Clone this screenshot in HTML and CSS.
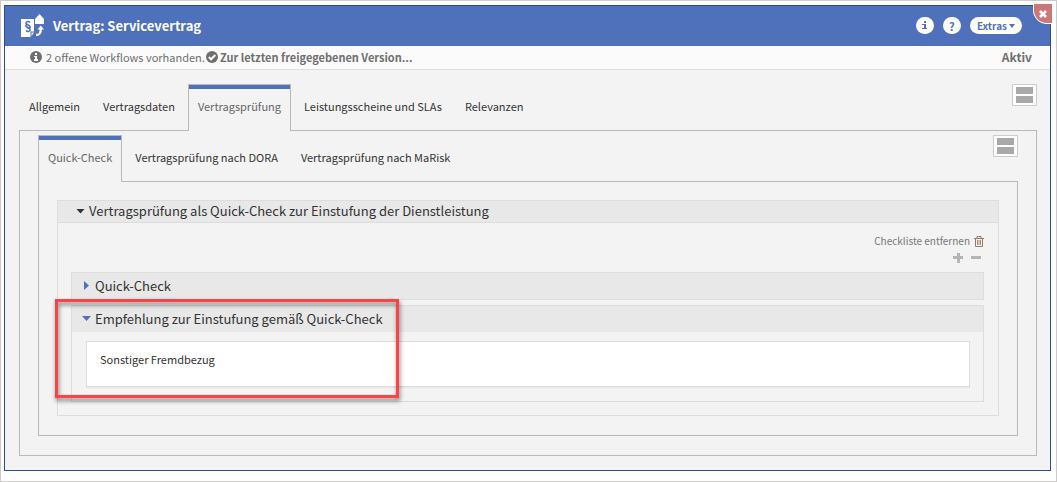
FILE: index.html
```html
<!DOCTYPE html>
<html lang="de">
<head>
    <meta charset="UTF-8">
    <meta name="viewport" content="width=device-width, initial-scale=1.0">
    <title>Vertrag: Servicevertrag</title>
    <link rel="stylesheet" href="styles.css">
</head>
<body>
    <main class="window">
        <header class="titlebar">
            <svg class="logo" viewBox="0 0 24 24" aria-hidden="true">
                <path fill="#fff" d="M0 5h13v12.500H9.500V23H0z"/>
                <path fill="#fff" d="M10.500 18.500H13L10.500 22z"/>
                <path fill="none" stroke="#4f70bb" stroke-width="1.600" d="M9 8.600C8.200 7 5 7.200 5 9c0 2 4.200 2 4.200 4 0 1.500-3 1.500-3.200-.2M5.800 10.300c-1.800 1.200-.8 2.500 1 3.200 2 .8 2.300 1.500 2.300 2.500 0 1.800-3.200 2-4 .3"/>
                <path fill="#fff" d="M14 10V5l4.500-5L23 5v5z"/>
                <path fill="none" stroke="#fff" stroke-width="2.400" d="M15 21c3.500 0 4.800-1.500 4.800-6"/>
                <path fill="#fff" d="M16.500 15.500l3.300-4 3.200 4z"/>
            </svg>
            <h1>Vertrag: Servicevertrag</h1>
            <div class="actions">
                <button class="pill round" type="button" aria-label="Information">
                    <svg width="5" height="9" viewBox="0 0 5 9"><path fill="currentColor" d="M2 0h2v2H2zM0 3h4v4h1v1H0V7h2V4H0z"/></svg>
                </button>
                <button class="pill round" type="button">?</button>
                <button class="pill" type="button">Extras<span class="caret"></span></button>
            </div>
            <button class="close" type="button" aria-label="Schließen">
                <svg width="8" height="8" viewBox="0 0 8 8"><path stroke="#fff" stroke-width="2.600" d="M1 1l6 6M7 1L1 7"/></svg>
            </button>
        </header>

        <div class="status">
            <svg class="status-icon" viewBox="0 0 12 12" aria-hidden="true">
                <circle cx="6" cy="6" r="6" fill="#6f6f6f"/>
                <path fill="#fff" d="M5 2h2v2H5zM4 5h3v3h1v2H4V8h1V6H4z"/>
            </svg>
            <span class="status-text">2 offene Workflows vorhanden.</span>
            <svg class="status-icon" viewBox="0 0 12 12" aria-hidden="true">
                <circle cx="6" cy="6" r="6" fill="#6f6f6f"/>
                <path fill="none" stroke="#fff" stroke-width="2" d="M2.800 6l2.300 2.300L9.300 4"/>
            </svg>
            <a class="version" href="#version">Zur letzten freigegebenen Version...</a>
            <strong class="state">Aktiv</strong>
        </div>

        <div class="content">
            <div class="tabs-row">
                <nav class="tabs">
                    <a class="tab" href="#allgemein">Allgemein</a>
                    <a class="tab" href="#vertragsdaten">Vertragsdaten</a>
                    <a class="tab active" href="#pruefung">Vertragsprüfung</a>
                    <a class="tab" href="#leistungsscheine">Leistungsscheine und SLAs</a>
                    <a class="tab" href="#relevanzen">Relevanzen</a>
                </nav>
                <button class="layout-btn" type="button" aria-label="Ansicht wechseln"><span></span><span></span></button>
            </div>
            <section class="panel" id="pruefung">
                <div class="tabs-row">
                    <nav class="tabs">
                        <a class="tab active" href="#quick">Quick-Check</a>
                        <a class="tab" href="#dora">Vertragsprüfung nach DORA</a>
                        <a class="tab" href="#marisk">Vertragsprüfung nach MaRisk</a>
                    </nav>
                    <button class="layout-btn" type="button" aria-label="Ansicht wechseln"><span></span><span></span></button>
                </div>
                <section class="panel inner" id="quick">
                    <div class="group">
                        <button class="group-head" type="button" aria-expanded="true">
                            <span class="arrow down"></span>Vertragsprüfung als Quick-Check zur Einstufung der Dienstleistung
                        </button>
                        <div class="group-body">
                            <div class="tools">
                                <button class="remove" type="button">Checkliste entfernen
                                    <svg width="10" height="11" viewBox="0 0 10 11" fill="none" stroke="#8b7b70">
                                        <path d="M0 2.500h10M3 2V.5h4V2M1.500 3v7.500h7V3"/>
                                        <path stroke="#c08a5c" d="M3.500 4v5M5 4v5M6.500 4v5"/>
                                    </svg>
                                </button>
                                <div class="zoom">
                                    <button type="button" aria-label="Alle aufklappen">
                                        <svg width="10" height="10" viewBox="0 0 10 10"><path fill="#b5b5b5" d="M4 0h3v3h3v3H7v4H4V6H0V3h4z"/></svg>
                                    </button>
                                    <button type="button" aria-label="Alle zuklappen">
                                        <svg width="10" height="10" viewBox="0 0 10 10"><path fill="#b5b5b5" d="M0 3h10v3H0z"/></svg>
                                    </button>
                                </div>
                            </div>
                            <div class="item">
                                <button class="item-head" type="button" aria-expanded="false">
                                    <span class="arrow right"></span>Quick-Check
                                </button>
                            </div>
                            <div class="item">
                                <button class="item-head" type="button" aria-expanded="true">
                                    <span class="arrow down"></span>Empfehlung zur Einstufung gemäß Quick-Check
                                </button>
                                <p class="result">Sonstiger Fremdbezug</p>
                                <div class="marker"></div>
                            </div>
                        </div>
                    </div>
                </section>
            </section>
        </div>
    </main>
</body>
</html>
```

FILE: styles.css
```css
* {
    box-sizing: border-box;
}
body {
    margin: 0;
    min-height: 100vh;
    padding: 4px 5px 10px 3px;
    border: 1px solid #cfcaca;
    background-color: #fff;
    font-family: "Noto Sans CJK SC", "Open Sans", sans-serif;
    font-size: 11px;
    line-height: 16px;
    color: #333;
}
button {
    padding: 0;
    border: 0;
    background: none;
    font: inherit;
    color: inherit;
    cursor: pointer;
}
a {
    color: inherit;
    text-decoration: none;
}
svg {
    display: block;
    flex: none;
}

/* Titelleiste */
.window {
    border: 1px solid #2f4c8f;
    background-color: #f3f3f3;
}
.titlebar {
    position: relative;
    display: flex;
    align-items: center;
    height: 40px;
    padding: 0 28px 1px 16px;
    background-color: #4f70bb;
    color: #fff;
}
.logo {
    width: 24px;
    height: 24px;
}
h1 {
    margin: 0 0 0 8px;
    font-size: 13px;
    line-height: 20px;
    font-weight: bold;
}
.actions {
    display: flex;
    gap: 9px;
    margin-left: auto;
}
.pill {
    display: flex;
    align-items: center;
    justify-content: center;
    height: 17px;
    padding: 0 7px;
    border-radius: 9px;
    background-color: #fff;
    color: #4f70bb;
    font-size: 10px;
    font-weight: bold;
    line-height: 16px;
}
.round {
    width: 18px;
    padding: 0;
    font-size: 11px;
}
.caret {
    margin-left: 2px;
    border: 3px solid transparent;
    border-top: 4px solid #4f70bb;
    border-bottom: 0;
}
.close {
    position: absolute;
    top: -2px;
    right: -2px;
    display: flex;
    align-items: center;
    justify-content: center;
    width: 19px;
    height: 20px;
    border: 1px solid #fff;
    border-width: 0 0 1px 1px;
    border-bottom-left-radius: 14px;
    background-color: #cb777a;
}

/* Statuszeile */
.status {
    display: flex;
    align-items: center;
    height: 24px;
    padding: 0 18px 2px 25px;
    border-bottom: 1px solid #ddd;
    background-color: #fbfbfb;
    color: #6f6f6f;
}
.status-icon {
    width: 12px;
    height: 12px;
}
.status-text {
    margin: 0 1px 0 4px;
}
.version {
    margin-left: 2px;
    font-weight: bold;
}
.state {
    margin-left: auto;
    font-size: 12px;
}

/* Reiter */
.content {
    padding: 14px 13px 14px 14px;
}
.tabs-row {
    display: flex;
    justify-content: space-between;
    align-items: flex-start;
}
.tabs {
    display: flex;
    gap: 3px;
    margin-bottom: -1px;
}
.tab {
    height: 47px;
    padding: 13px 9px 0;
    border: 1px solid transparent;
    border-bottom: 0;
}
.active {
    position: relative;
    border-color: #b9b9b9;
    background-color: #f3f3f3;
    box-shadow: inset 0 4px #4f70bb;
    color: #666;
}
.layout-btn {
    display: flex;
    flex-direction: column;
    gap: 2px;
    width: 25px;
    height: 22px;
    padding: 2px 3px;
    border: 1px solid #ccc;
    background-color: #fff;
}
.layout-btn span {
    width: 17px;
    height: 7px;
    background-color: #a9a9a9;
}
.panel {
    padding: 4px 18px 19px;
    border: 1px solid #b9b9b9;
}
.inner {
    padding-top: 18px;
}

/* Aufklappbare Gruppen */
.group {
    border: 1px solid #ddd;
}
.group-head,
.item-head {
    display: flex;
    align-items: center;
    width: 100%;
    background-color: #e8e8e8;
    font-size: 13px;
    text-align: left;
}
.group-head {
    height: 22px;
    padding: 0 0 1px 18px;
    border-bottom: 1px solid #ddd;
}
.group-body {
    padding: 10px 14px 13px 13px;
}
.tools {
    display: flex;
    flex-direction: column;
    align-items: flex-end;
    gap: 4px;
    height: 39px;
}
.remove {
    display: flex;
    align-items: center;
    gap: 4px;
    color: #777;
    font-size: 10px;
}
.zoom {
    display: flex;
    gap: 8px;
    margin-right: 3px;
}
.item {
    position: relative;
    border: 1px solid #ddd;
}
.item + .item {
    margin-top: 5px;
}
.item-head {
    height: 26px;
    padding: 0 0 1px 10px;
}
.arrow {
    flex: none;
    width: 9px;
    height: 5px;
    margin-right: 4px;
    background-color: #333;
    clip-path: polygon(0 0, 100% 0, 50% 100%);
}
.item .arrow {
    background-color: #4f70bb;
}
.item .right {
    width: 5px;
    height: 9px;
    margin: 0 6px 0 2px;
    clip-path: polygon(0 0, 100% 50%, 0 100%);
}
.result {
    min-height: 46px;
    margin: 9px 13px 14px 14px;
    padding: 9px 13px;
    border: 1px solid #ddd;
    background-color: #fff;
    box-shadow: 0 1px 1px rgba(0, 0, 0, 0.05);
}
.marker {
    position: absolute;
    top: -7px;
    left: -17px;
    width: 344px;
    height: 99px;
    border: 3px solid #fb4343;
    filter: drop-shadow(1px 3px 2px rgba(0, 0, 0, 0.5));
    pointer-events: none;
}
```
